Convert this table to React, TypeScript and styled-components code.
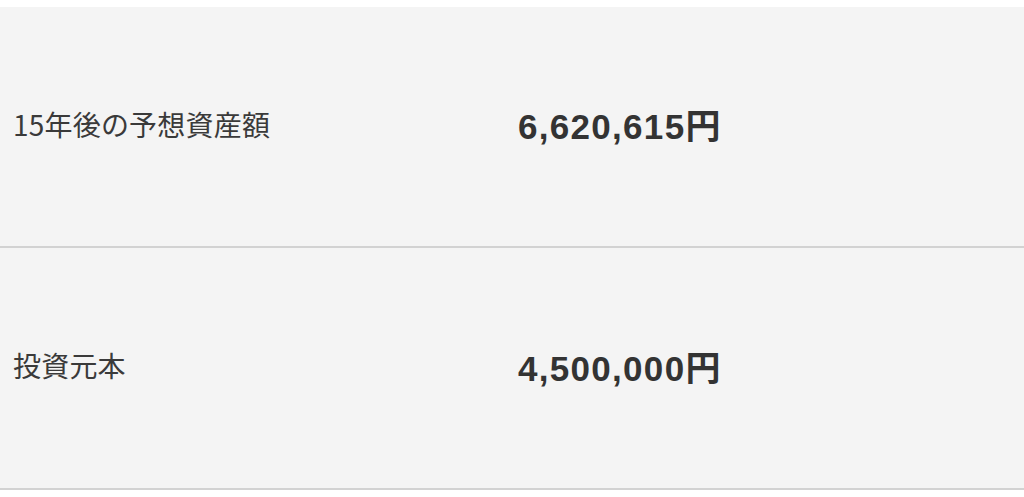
import React from 'react';
import styled, { createGlobalStyle } from 'styled-components';

interface ResultRow {
  label: string;
  value: string;
}

const rows: ResultRow[] = [
  { label: '15年後の予想資産額', value: '6,620,615円' },
  { label: '投資元本', value: '4,500,000円' },
];

const App: React.FC = () => {
  return (
    <>
      <GlobalStyle />
      <ResultTable>
        {rows.map((row) => (
          <Row key={row.label}>
            <Label>{row.label}</Label>
            <Value>{row.value}</Value>
          </Row>
        ))}
      </ResultTable>
    </>
  );
};

const GlobalStyle = createGlobalStyle`
  html, body {
    margin: 0;
    padding: 0;
    background: #ffffff;
  }

  body {
    font-family: "Liberation Sans", "Noto Sans CJK JP", sans-serif;
    color: #333333;
  }
`;

const ResultTable = styled.div`
  display: flex;
  flex-direction: column;
  padding-top: 7px;
`;

const Row = styled.div`
  display: grid;
  grid-template-columns: 518px 1fr;
  align-items: center;
  height: 239px;
  background-color: #f4f4f4;
  border-bottom: 2px solid #d2d2d2;

  & + & {
    height: 240px;
  }
`;

const Label = styled.div`
  padding: 0 0 6px 13px;
  font-family: "Noto Sans CJK JP", "Liberation Sans", sans-serif;
  font-size: 28px;
  line-height: 1;
  font-weight: 400;
  color: #3a3a3a;
  letter-spacing: 0.2px;
`;

const Value = styled.div`
  font-size: 35px;
  line-height: 1;
  font-weight: 700;
  color: #333333;
  letter-spacing: 1.3px;
`;

export default App;
